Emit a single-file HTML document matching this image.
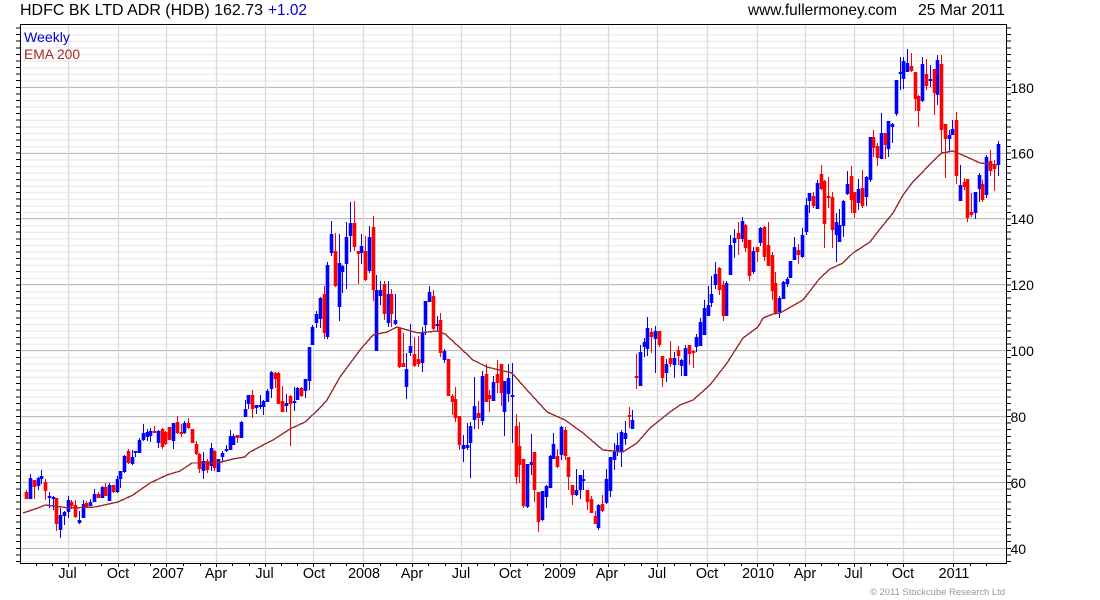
<!DOCTYPE html>
<html><head><meta charset="utf-8"><title>HDFC BK LTD ADR</title>
<style>html,body{margin:0;padding:0;background:#fff}svg{display:block}text{font-family:"Liberation Sans",Arial,sans-serif}</style>
</head><body>
<svg width="1100" height="600" viewBox="0 0 1100 600" xmlns="http://www.w3.org/2000/svg">
<rect width="1100" height="600" fill="#fff"/>
<line x1="513.5" y1="27.5" x2="513.5" y2="563" stroke="#eee" stroke-width="985" stroke-dasharray="1.4 5.186"/>
<g shape-rendering="crispEdges">
<path stroke="#bbb" d="M21 87.5H1006M21 153.5H1006M21 218.5H1006M21 284.5H1006M21 350.5H1006M21 416.5H1006M21 482.5H1006M21 548.5H1006"/>
</g>
<path stroke="#dadada" stroke-width="1.3" d="M68.5 25V563M118.5 25V563M166.5 25V563M216.5 25V563M265.5 25V563M313.5 25V563M363.5 25V563M412.5 25V563M461.5 25V563M510.5 25V563M560.5 25V563M608.5 25V563M657.5 25V563M707.5 25V563M757.5 25V563M805.5 25V563M854.5 25V563M903.5 25V563M953.5 25V563"/>
<g transform="translate(.5,0)">
<path shape-rendering="crispEdges" fill="none" stroke="#00f" stroke-width="1" d="M30 474V499M38 477V490M41 470V484M49 492V508M53 496V510M60 508V538M64 511V525M68 496V518M79 511V524M83 500V518M90 499V506M94 489V502M102 486V498M109 483V501M117 476V493M120 471V488M124 455V473M132 450V465M135 451V457M139 438V453M143 424V441M147 429V441M150 428V442M158 430V448M173 423V449M184 421V434M203 452V479M211 443V471M218 459V472M222 451V462M226 445V452M230 430V450M233 434V445M241 421V438M245 400V417M248 395V409M256 405V414M260 395V409M263 400V415M267 389V402M271 371V398M286 394V412M294 387V411M297 387V400M305 379V398M309 347V390M312 325V345M316 311V328M320 297V328M327 262V339M331 221V256M339 234V321M342 265V293M346 222V289M350 202V252M361 234V264M369 226V273M376 275V351M380 281V305M388 281V327M395 294V325M406 353V399M410 324V356M422 327V372M425 301V335M429 286V302M437 316V332M444 349V363M463 435V462M467 423V450M470 422V478M474 377V429M482 371V425M493 376V401M504 381V436M508 364V402M512 363V443M527 464V508M531 434V475M542 491V521M546 485V508M550 455V488M553 433V459M561 426V460M576 469V496M580 475V499M583 470V490M598 504V530M606 469V504M610 457V497M614 443V470M617 433V456M621 430V467M625 421V445M632 410V429M640 345V386M644 338V357M647 317V356M655 326V373M666 359V382M674 352V378M681 359V376M685 345V376M696 334V352M700 318V346M704 300V335M708 286V316M711 276V307M715 262V289M726 281V316M730 235V275M734 229V258M742 217V242M753 247V274M760 227V246M779 296V318M783 281V299M787 277V287M790 261V278M794 237V260M802 228V258M806 198V235M809 193V213M817 180V209M836 213V262M839 209V242M843 200V237M847 171V195M858 179V210M866 176V206M870 137V182M881 113V159M888 121V157M892 123V143M896 80V116M900 57V90M903 57V89M907 49V72M922 57V102M930 65V87M937 55V105M949 130V151M952 120V135M960 165V201M975 192V219M979 173V202M986 155V198M998 141V176"/>
<path fill="none" stroke="#00f" stroke-width="3.6" d="M30 478V499M38 478V486M41 476V479M49 496V498M53 497V499M60 515V530M64 512V516M68 500V512M79 520V523M83 504V518M90 502V506M94 494V502M102 487V498M109 485V501M117 479V492M120 471V479M124 456V472M132 457V464M135 451V453M139 440V453M143 433V440M147 432V437M150 431V436M158 431V443M173 423V441M184 423V433M203 461V471M211 448V466M218 459V472M222 453V457M226 449V451M230 436V450M233 436V445M241 422V438M245 409V417M248 395V404M256 405V408M260 405V407M263 401V407M267 391V402M271 372V389M286 403V406M294 401V403M297 388V400M305 379V391M309 347V381M312 327V345M316 314V323M320 298V319M327 265V337M331 234V253M339 263V307M342 266V272M346 237V264M350 223V236M361 246V253M369 237V271M376 290V351M380 290V296M388 294V323M395 320V324M406 369V387M410 346V353M422 333V363M425 301V325M429 292V302M437 324V326M444 351V360M463 445V449M467 445V448M470 426V443M474 406V420M482 376V421M493 382V401M504 381V412M508 378V394M512 395V397M527 464V507M531 462V465M542 491V520M546 486V497M550 456V488M553 444V459M561 427V455M576 490V495M580 475V490M583 479V481M598 505V528M606 479V503M610 457V491M614 451V460M617 445V451M621 432V452M625 433V439M632 420V429M640 352V386M644 342V347M647 328V349M655 331V339M666 364V373M674 358V365M681 360V366M685 348V376M696 337V347M700 322V346M704 308V335M708 305V316M711 294V303M715 274V285M726 283V316M730 245V275M734 238V243M742 221V239M753 251V272M760 228V243M779 298V312M783 282V299M787 279V284M790 261V278M794 247V260M802 235V257M806 205V232M809 193V201M817 183V209M836 222V235M839 225V242M843 201V226M847 184V194M858 189V203M866 177V197M870 137V180M881 133V159M888 121V149M892 124V127M896 80V114M900 72V74M903 61V79M907 63V72M922 64V101M930 79V81M937 60V95M949 135V139M952 129V135M960 185V201M975 192V213M979 175V189M986 157V195M998 144V165"/>
<path shape-rendering="crispEdges" fill="none" stroke="#f00" stroke-width="1" d="M26 490V499M34 480V499M45 479V500M56 498V531M71 500V509M75 500V518M86 501V507M98 492V498M105 483V496M113 485V493M128 449V464M154 426V433M162 428V449M165 431V445M169 427V440M177 416V434M181 424V437M188 418V429M192 429V443M196 441V455M199 453V473M207 459V473M214 450V471M237 435V443M252 390V418M275 372V388M278 372V404M282 386V412M290 395V446M301 387V397M324 286V339M335 233V287M354 201V251M358 251V284M365 236V281M373 216V301M384 281V320M391 289V327M399 328V368M403 333V367M414 337V367M418 336V367M433 290V330M440 313V357M448 359V396M452 394V415M455 387V422M459 416V450M478 401V429M486 364V402M489 390V412M497 360V393M501 364V406M516 414V484M519 422V483M523 459V508M534 452V502M538 492V532M557 449V468M565 427V460M568 457V490M572 485V505M587 490V510M591 496V513M595 511V524M602 495V512M629 407V428M636 354V389M651 328V353M659 331V347M662 356V387M670 341V367M678 346V365M689 345V365M693 350V368M719 267V295M723 281V321M738 222V255M745 224V252M749 240V281M757 247V262M764 226V261M768 222V266M772 252V300M775 272V314M798 244V264M813 192V208M821 165V190M824 180V248M828 177V208M832 192V248M851 166V213M854 192V218M862 170V208M873 130V157M877 143V166M885 133V159M911 53V72M915 72V111M918 95V127M926 59V90M934 69V115M941 55V154M945 124V178M956 112V184M964 178V190M967 179V222M971 193V217M982 180V202M990 150V176M994 160V191"/>
<path fill="none" stroke="#f00" stroke-width="3.6" d="M26 492V499M34 480V487M45 482V491M56 498V524M71 502V506M75 505V517M86 503V507M98 494V498M105 487V496M113 485V492M128 451V463M154 431V433M162 429V447M165 432V444M169 427V440M177 422V433M181 432V434M188 423V428M192 429V443M196 444V454M199 454V469M207 461V470M214 451V468M237 435V438M252 395V409M275 373V379M278 373V404M282 401V412M290 396V404M301 388V396M324 294V333M335 251V286M354 223V247M358 251V254M365 251V280M373 227V290M384 284V314M391 294V314M399 328V367M403 363V367M414 354V366M418 359V364M433 296V329M440 320V353M448 359V396M452 396V402M455 399V418M459 416V445M478 413V418M486 374V402M489 395V399M497 374V383M501 364V393M516 426V477M519 446V465M523 459V506M534 452V490M538 492V522M557 456V467M565 430V456M568 457V477M572 485V495M587 490V502M591 499V513M595 516V524M602 504V511M629 415V417M636 376V378M651 332V337M659 331V345M662 356V378M670 358V364M678 350V356M689 345V354M693 351V353M719 268V290M723 285V316M738 233V239M745 225V248M749 240V276M757 247V252M764 227V257M768 245V266M772 255V291M775 283V314M798 250V255M813 196V206M821 174V189M824 181V224M828 196V198M832 197V230M851 176V200M854 192V213M862 188V206M873 137V148M877 146V158M885 133V145M911 66V71M915 72V99M918 96V111M926 74V86M934 69V93M941 64V130M945 124V139M956 120V176M964 182V187M967 179V218M971 212V215M982 184V200M990 161V171M994 164V169"/>
</g>
<g shape-rendering="crispEdges">
<polyline fill="none" stroke="#9c2a2a" stroke-width="1.4" points="23,513 38,508 45,505 62,507 68,508 95,507 118,502 133,495 150,483 167,475 180,471 192,463 217,463 233,459 245,457 250,452 267,443 273,440 290,429 305,422 320,408 327,400 340,377 360,350 373,335 387,332 397,327 418,333 437,331 445,334 457,345 473,360 487,367 512,373 527,390 547,412 565,420 583,433 597,445 603,450 623,452 637,443 650,428 660,420 670,412 680,405 693,400 710,385 727,363 743,338 758,327 763,318 773,314 780,313 803,300 820,278 830,269 843,263 853,253 870,242 880,229 893,213 903,195 912,183 937,157 942,153 953,151 967,157 980,163 997,165"/>
<rect x="20.5" y="24.5" width="986" height="539" fill="none" stroke="#000" stroke-width="1"/>
<path stroke="#000" d="M68.5 564V567M118.5 564V567M166.5 564V567M216.5 564V567M265.5 564V567M313.5 564V567M363.5 564V567M412.5 564V567M461.5 564V567M510.5 564V567M560.5 564V567M608.5 564V567M657.5 564V567M707.5 564V567M757.5 564V567M805.5 564V567M854.5 564V567M903.5 564V567M953.5 564V567M36.5 564V566M52.5 564V566M85.5 564V566M101.5 564V566M134.5 564V566M150.5 564V566M183.5 564V566M200.5 564V566M232.5 564V566M249.5 564V566M281.5 564V566M297.5 564V566M330.5 564V566M346.5 564V566M380.5 564V566M396.5 564V566M428.5 564V566M445.5 564V566M477.5 564V566M494.5 564V566M527.5 564V566M543.5 564V566M576.5 564V566M592.5 564V566M624.5 564V566M641.5 564V566M674.5 564V566M690.5 564V566M724.5 564V566M741.5 564V566M773.5 564V566M789.5 564V566M821.5 564V566M838.5 564V566M870.5 564V566M887.5 564V566M970.5 564V566M986.5 564V566"/>
<line x1="18" y1="27.5" x2="18" y2="563" stroke="#000" stroke-width="4" stroke-dasharray="1 5.586"/>
<line x1="1009" y1="27.5" x2="1009" y2="563" stroke="#000" stroke-width="4" stroke-dasharray="1 5.586"/>
</g>
<text x="20" y="15" font-size="16" fill="#000" textLength="243" lengthAdjust="spacingAndGlyphs">HDFC BK LTD ADR (HDB) 162.73</text>
<text x="268" y="15" font-size="16" fill="#0000cc" textLength="39" lengthAdjust="spacingAndGlyphs">+1.02</text>
<text x="748" y="15" font-size="16" fill="#000" textLength="149" lengthAdjust="spacingAndGlyphs">www.fullermoney.com</text>
<text x="918" y="15" font-size="16" fill="#000" textLength="87" lengthAdjust="spacingAndGlyphs">25 Mar 2011</text>
<text x="24" y="42" font-size="14" fill="#0000cc" textLength="46" lengthAdjust="spacingAndGlyphs">Weekly</text>
<text x="24" y="59" font-size="14" fill="#a52a2a" textLength="56" lengthAdjust="spacingAndGlyphs">EMA 200</text>
<g font-size="14" fill="#000">
<text x="1010.5" y="93">180</text><text x="1010.5" y="158.5">160</text><text x="1010.5" y="224">140</text><text x="1010.5" y="290">120</text><text x="1010.5" y="356">100</text><text x="1010.5" y="422">80</text><text x="1010.5" y="488">60</text><text x="1010.5" y="554">40</text>
</g>
<g font-size="14.3" fill="#000" text-anchor="middle">
<text x="67.5" y="578">Jul</text><text x="118" y="578">Oct</text><text x="168" y="578">2007</text><text x="216" y="578">Apr</text><text x="264.5" y="578">Jul</text><text x="314" y="578">Oct</text><text x="364" y="578">2008</text><text x="412" y="578">Apr</text><text x="461" y="578">Jul</text><text x="510" y="578">Oct</text><text x="560" y="578">2009</text><text x="607" y="578">Apr</text><text x="657" y="578">Jul</text><text x="707" y="578">Oct</text><text x="758" y="578">2010</text><text x="805" y="578">Apr</text><text x="853.5" y="578">Jul</text><text x="903" y="578">Oct</text><text x="954" y="578">2011</text>
</g>
<text x="870" y="595" font-size="9.5" fill="#999" textLength="135" lengthAdjust="spacing">© 2011 Stockcube Research Ltd</text>
</svg>
</body></html>
